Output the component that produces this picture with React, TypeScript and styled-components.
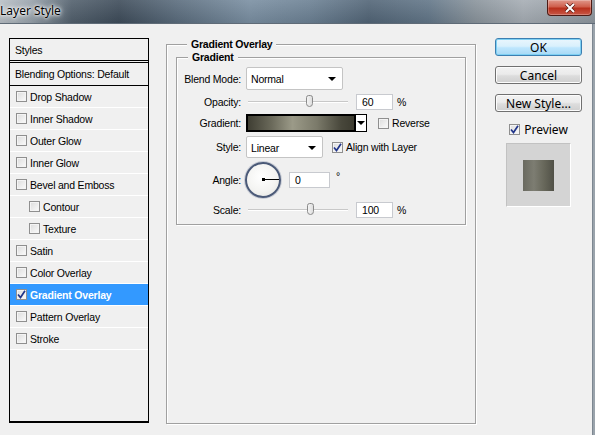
import styled, { createGlobalStyle } from "styled-components";

const GlobalStyle = createGlobalStyle`
    html, body {
        margin: 0;
        padding: 0;
        background: #9aa3ab;
    }
    * {
        box-sizing: border-box;
    }
`;

type StyleItem = { name: string; checked?: boolean; indent?: boolean; selected?: boolean };

const styleItems: StyleItem[] = [
    {name: "Drop Shadow"},
    {name: "Inner Shadow"},
    {name: "Outer Glow"},
    {name: "Inner Glow"},
    {name: "Bevel and Emboss"},
    {name: "Contour", indent: true},
    {name: "Texture", indent: true},
    {name: "Satin"},
    {name: "Color Overlay"},
    {name: "Gradient Overlay", checked: true, selected: true},
    {name: "Pattern Overlay"},
    {name: "Stroke"},
];

const CheckBox = ({checked}: { checked?: boolean }) => (
    <Box>
        {checked && (
            <svg width="9" height="9" viewBox="0 0 9 9">
                <path d="M1 4.5 L3.5 7.5 L8 0.8" fill="none" stroke="#21358a" strokeWidth="1.7"/>
            </svg>
        )}
    </Box>
);

const Slider = ({pos}: { pos: number }) => (
    <Track>
        <Thumb style={{left: pos}}/>
    </Track>
);

export default function App() {
    return (
        <Window>
            <GlobalStyle/>
            <TitleBar>
                <Title>Layer Style</Title>
                <CloseButton>
                    <svg width="12" height="10" viewBox="0 0 12 10">
                        <path d="M2 1 L10 9 M10 1 L2 9" stroke="#5a1a12" strokeWidth="3.4"/>
                        <path d="M2 1 L10 9 M10 1 L2 9" stroke="#fff" strokeWidth="2"/>
                    </svg>
                </CloseButton>
            </TitleBar>
            <Body>
                <StylesList>
                    <Header>Styles</Header>
                    <Blending>Blending Options: Default</Blending>
                    {styleItems.map((item) => (
                        <Row key={item.name} indent={item.indent} selected={item.selected}>
                            <CheckBox checked={item.checked}/>
                            {item.name}
                        </Row>
                    ))}
                </StylesList>

                <OuterGroup>
                    <Legend>Gradient Overlay</Legend>
                    <InnerGroup>
                        <Legend>Gradient</Legend>
                        <Label>Blend Mode:</Label>
                        <Controls>
                            <Select width={97}>Normal<Arrow/></Select>
                        </Controls>

                        <Label>Opacity:</Label>
                        <Controls>
                            <Slider pos={58}/>
                            <NumberBox width={37}>60</NumberBox>
                            <Unit>%</Unit>
                        </Controls>

                        <Label>Gradient:</Label>
                        <Controls>
                            <GradientPicker>
                                <Swatch/>
                                <PickerArrow><Arrow/></PickerArrow>
                            </GradientPicker>
                            <CheckLabel gap={11}><CheckBox/>Reverse</CheckLabel>
                        </Controls>

                        <Label>Style:</Label>
                        <Controls>
                            <Select width={77}>Linear<Arrow/></Select>
                            <CheckLabel gap={9}><CheckBox checked/>Align with Layer</CheckLabel>
                        </Controls>

                        <Label>Angle:</Label>
                        <Controls>
                            <Dial>
                                <DialHand/>
                                <DialDot/>
                            </Dial>
                            <NumberBox width={41}>0</NumberBox>
                            <Degree>°</Degree>
                        </Controls>

                        <Label>Scale:</Label>
                        <Controls>
                            <Slider pos={59}/>
                            <NumberBox width={37}>100</NumberBox>
                            <Unit>%</Unit>
                        </Controls>
                    </InnerGroup>
                </OuterGroup>

                <Side>
                    <Button primary>OK</Button>
                    <Button>Cancel</Button>
                    <Button>New Style...</Button>
                    <PreviewToggle><CheckBox checked/>Preview</PreviewToggle>
                    <PreviewBox>
                        <PreviewSquare/>
                    </PreviewBox>
                </Side>
            </Body>
        </Window>
    );
}

const Window = styled.div`
    width: 595px;
    height: 435px;
    display: flex;
    flex-direction: column;
    overflow: hidden;
`;

const TitleBar = styled.div`
    height: 24px;
    flex-shrink: 0;
    display: flex;
    justify-content: space-between;
    align-items: flex-start;
    padding-right: 3px;
    border-bottom: 1px solid #5f6b77;
    background: linear-gradient(180deg, rgba(255, 255, 255, 0.1), rgba(0, 0, 0, 0.08)),
    linear-gradient(90deg, #b9c0c6 0%, #9aa4ad 5%, #52606d 12%, #3e4c5a 20%, #5b6d7e 30%,
    #7a8fa2 42%, #6c8194 52%, #526577 62%, #627688 72%, #8a949c 80%, #a6adb4 88%, #8e979f 100%);
`;

const Title = styled.span`
    padding-top: 2px;
    font-family: "Noto Sans", "Open Sans", sans-serif;
    font-size: 12px;
    color: #000;
    text-shadow: 0 0 6px #fff, 0 0 4px #fff, 0 0 2px #fff;
`;

const CloseButton = styled.div`
    width: 45px;
    height: 16px;
    display: flex;
    align-items: center;
    justify-content: center;
    border: 1px solid #4d1a14;
    border-top: none;
    border-radius: 0 0 4px 4px;
    background: linear-gradient(180deg, #e0978a 0%, #cf5f4c 45%, #b8301c 55%, #c85746 100%);
    box-shadow: inset 0 0 0 1px rgba(255, 255, 255, 0.25);
`;

const Body = styled.div`
    flex: 1;
    display: flex;
    align-items: stretch;
    padding: 14px 0 11px 9px;
    margin-right: 2px;
    background: #f0f0f0;
    border-right: 1px solid #7d8791;
    font-family: "Liberation Sans", Arial, sans-serif;
    font-size: 10.5px;
    letter-spacing: -0.2px;
    color: #000;
`;

const StylesList = styled.div`
    width: 140px;
    margin-bottom: 1px;
    border: 1px solid #000;
    border-bottom-width: 2px;
    display: flex;
    flex-direction: column;
`;

const Header = styled.div`
    height: 24px;
    padding: 5px 5px 0;
    border-bottom: 3px double #000;
`;

const Blending = styled.div`
    height: 23px;
    padding: 5px 5px 0;
    border-bottom: 1px solid #000;
`;

const Row = styled.div<{ indent?: boolean; selected?: boolean }>`
    height: 22px;
    display: flex;
    align-items: center;
    gap: 3px;
    padding-left: ${(p) => (p.indent ? 19 : 6)}px;
    border-bottom: 1px solid #fff;
    background: ${(p) => (p.selected ? "#3399ff" : "transparent")};
    color: ${(p) => (p.selected ? "#fff" : "#000")};
    font-weight: ${(p) => (p.selected ? "bold" : "normal")};
`;

const Box = styled.span`
    width: 11px;
    height: 11px;
    flex-shrink: 0;
    display: inline-flex;
    align-items: center;
    justify-content: center;
    border: 1px solid #8f8f8f;
    background: linear-gradient(135deg, #dcdcdc, #fbfbfb);
    box-shadow: inset 0 0 0 1px #f4f4f4;
`;

const OuterGroup = styled.fieldset`
    width: 310px;
    margin: 0 0 0 17px;
    padding: 0 9px;
    min-width: 0;
    border: 1px solid #a0a0a0;
    box-shadow: inset 1px 1px 0 #fff, 1px 1px 0 #fff;
`;

const Legend = styled.legend`
    margin-left: 11px;
    padding: 0 4px;
    font-weight: bold;
    line-height: 13px;
    background: #f0f0f0;
`;

const InnerGroup = styled.fieldset`
    margin: 0;
    padding: 3px 0 6px 0;
    min-width: 0;
    border: 1px solid #a0a0a0;
    box-shadow: inset 1px 1px 0 #fff, 1px 1px 0 #fff;
    display: grid;
    grid-template-columns: 64px 1fr;
    grid-template-rows: 23px 16px 18px 22px 36px 16px;
    column-gap: 5px;
    row-gap: 4px;
`;

const Label = styled.span`
    align-self: center;
    text-align: right;
    white-space: nowrap;
`;

const Controls = styled.div`
    display: flex;
    align-items: center;
`;

const Select = styled.div<{ width: number }>`
    width: ${(p) => p.width}px;
    height: 100%;
    display: flex;
    align-items: center;
    justify-content: space-between;
    padding: 1px 6px 0 4px;
    background: #fff;
    border: 1px solid #c4c4c4;
    border-radius: 2px;
`;

const Arrow = styled.span`
    width: 0;
    height: 0;
    border-left: 4px solid transparent;
    border-right: 4px solid transparent;
    border-top: 4px solid #000;
`;

const Track = styled.div`
    position: relative;
    width: 100px;
    height: 2px;
    margin-left: 2px;
    background: #c8c8c8;
    border-bottom: 1px solid #fff;
`;

const Thumb = styled.span`
    position: absolute;
    top: -6px;
    width: 7px;
    height: 12px;
    border: 1px solid #8a8a8a;
    border-radius: 3px 3px 4px 4px;
    background: linear-gradient(90deg, #f4f4f4, #dedede);
`;

const NumberBox = styled.div<{ width: number }>`
    width: ${(p) => p.width}px;
    height: 16px;
    margin-left: 8px;
    padding: 1px 0 0 5px;
    background: #fff;
    border: 1px solid #c8cacf;
    line-height: 13px;
`;

const Unit = styled.span`
    margin-left: 4px;
`;

const GradientPicker = styled.div`
    display: flex;
    height: 18px;
`;

const Swatch = styled.div`
    width: 110px;
    border: 2px solid #000;
    background: linear-gradient(90deg, #3f3e33 0%, #6a695a 22%, #9b9a88 42%, #7b7a6a 65%, #48473b 88%, #3c3b30 100%);
`;

const PickerArrow = styled.div`
    width: 11px;
    display: flex;
    align-items: center;
    justify-content: center;
    background: #fff;
    border: 1px solid #000;
    border-left: none;
`;

const CheckLabel = styled.label<{ gap: number }>`
    display: flex;
    align-items: center;
    gap: 3px;
    margin-left: ${(p) => p.gap}px;
`;

const Dial = styled.div`
    position: relative;
    width: 36px;
    height: 36px;
    margin-left: -1px;
    border-radius: 50%;
    border: 2px solid #4b5a78;
    background: radial-gradient(circle at 45% 40%, #ffffff 0%, #f4f4f2 55%, #e2e2de 100%);
    box-shadow: 0 0 0 1px #c9cdd6;
`;

const DialHand = styled.span`
    position: absolute;
    left: 16px;
    top: 15px;
    width: 16px;
    height: 1px;
    background: #000;
`;

const DialDot = styled.span`
    position: absolute;
    left: 15px;
    top: 14px;
    width: 3px;
    height: 3px;
    background: #000;
`;

const Degree = styled.span`
    align-self: flex-start;
    margin: 8px 0 0 6px;
`;

const Side = styled.div`
    width: 87px;
    margin-left: 19px;
    display: flex;
    flex-direction: column;
    align-items: center;
    font-family: "Noto Sans", "Open Sans", sans-serif;
    font-size: 12px;
    letter-spacing: 0;
`;

const Button = styled.div<{ primary?: boolean }>`
    width: 100%;
    height: 18px;
    margin-bottom: 10px;
    display: flex;
    align-items: center;
    justify-content: center;
    border: 1px solid ${(p) => (p.primary ? "#3c7fb1" : "#707070")};
    border-radius: 3px;
    background: ${(p) =>
            p.primary
                    ? "linear-gradient(180deg, #eaf6fd 0%, #d9f0fc 45%, #bee6fd 55%, #a7d9f5 100%)"
                    : "linear-gradient(180deg, #f2f2f2 0%, #ebebeb 45%, #dddddd 55%, #cfcfcf 100%)"};
    box-shadow: inset 0 0 0 1px ${(p) => (p.primary ? "#7ed0f3" : "#fcfcfc")};
`;

const PreviewToggle = styled.label`
    display: flex;
    align-items: center;
    gap: 4px;
    margin-top: 0;
    height: 14px;
`;

const PreviewBox = styled.div`
    width: 65px;
    height: 64px;
    margin-top: 7px;
    display: flex;
    align-items: center;
    justify-content: center;
    background: #d4d4d4;
    border: 1px solid #fff;
    border-top-color: #c2c2c2;
    border-left-color: #c2c2c2;
`;

const PreviewSquare = styled.div`
    width: 31px;
    height: 31px;
    background: linear-gradient(90deg, #6a6a60 0%, #7d7d72 35%, #666659 70%, #505047 100%);
`;
